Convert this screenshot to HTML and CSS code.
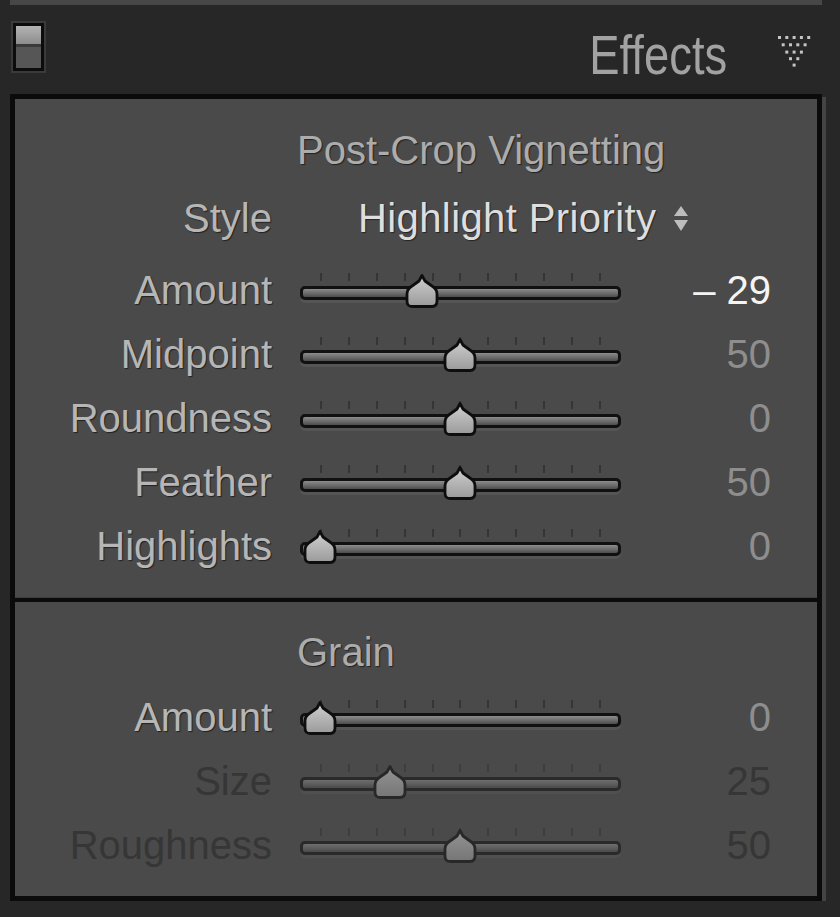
FILE: index.html
```html
<!DOCTYPE html>
<html lang="en">
<head>
  <meta charset="UTF-8">
  <title>Effects</title>
  <link rel="stylesheet" href="styles.css">
</head>
<body>
  <div class="top-strip"></div>

  <!-- Panel header -->
  <div class="panel-header">
    <div class="toggle"><div class="toggle-knob"></div></div>
    <h2 class="panel-title">Effects</h2>
    <svg class="collapse-icon" width="36" height="33" viewBox="0 0 36 33">
      <g fill="#c4c4c4">
        <rect x="2" y="1" width="3" height="3"/><rect x="9.3" y="1" width="3" height="3"/><rect x="16.6" y="1" width="3" height="3"/><rect x="23.9" y="1" width="3" height="3"/><rect x="31.2" y="1" width="3" height="3"/>
        <rect x="5.7" y="8.3" width="3" height="3"/><rect x="13" y="8.3" width="3" height="3"/><rect x="20.3" y="8.3" width="3" height="3"/><rect x="27.6" y="8.3" width="3" height="3"/>
        <rect x="9.3" y="15.6" width="3" height="3"/><rect x="16.6" y="15.6" width="3" height="3"/><rect x="23.9" y="15.6" width="3" height="3"/>
        <rect x="13" y="22.2" width="3" height="3"/><rect x="20.3" y="22.2" width="3" height="3"/>
        <rect x="16.6" y="28.6" width="3" height="3"/>
      </g>
    </svg>
  </div>

  <div class="panel">
    <!-- Vignetting -->
    <section class="group group-vignette">
      <div class="row group-title-row">
        <span class="label"></span>
        <span class="group-title">Post-Crop Vignetting</span>
      </div>
      <div class="row style-row">
        <span class="label">Style</span>
        <span class="style-value">Highlight Priority
          <svg class="updown" width="18" height="27" viewBox="0 0 18 27">
            <path d="M9 1 L16 11 L2 11 Z" fill="#bdbdbd"/>
            <path d="M2 15 L16 15 L9 26 Z" fill="#bdbdbd"/>
          </svg>
        </span>
      </div>
      <div class="row slider-row first-slider">
        <span class="label">Amount</span>
        <div class="slider" style="--v: 0.365">
          <div class="ticks"><i></i><i></i><i></i><i></i><i></i><i></i><i></i><i></i><i></i><i></i><i></i></div>
          <div class="track"></div>
          <svg class="thumb" width="34" height="34" viewBox="0 0 34 34"><use href="#thumb-shape"/></svg>
        </div>
        <span class="value value-active">&ndash; 29</span>
      </div>
      <div class="row slider-row">
        <span class="label">Midpoint</span>
        <div class="slider" style="--v: 0.5">
          <div class="ticks"><i></i><i></i><i></i><i></i><i></i><i></i><i></i><i></i><i></i><i></i><i></i></div>
          <div class="track"></div>
          <svg class="thumb" width="34" height="34" viewBox="0 0 34 34"><use href="#thumb-shape"/></svg>
        </div>
        <span class="value">50</span>
      </div>
      <div class="row slider-row">
        <span class="label">Roundness</span>
        <div class="slider" style="--v: 0.5">
          <div class="ticks"><i></i><i></i><i></i><i></i><i></i><i></i><i></i><i></i><i></i><i></i><i></i></div>
          <div class="track"></div>
          <svg class="thumb" width="34" height="34" viewBox="0 0 34 34"><use href="#thumb-shape"/></svg>
        </div>
        <span class="value">0</span>
      </div>
      <div class="row slider-row">
        <span class="label">Feather</span>
        <div class="slider" style="--v: 0.5">
          <div class="ticks"><i></i><i></i><i></i><i></i><i></i><i></i><i></i><i></i><i></i><i></i><i></i></div>
          <div class="track"></div>
          <svg class="thumb" width="34" height="34" viewBox="0 0 34 34"><use href="#thumb-shape"/></svg>
        </div>
        <span class="value">50</span>
      </div>
      <div class="row slider-row">
        <span class="label">Highlights</span>
        <div class="slider" style="--v: 0">
          <div class="ticks"><i></i><i></i><i></i><i></i><i></i><i></i><i></i><i></i><i></i><i></i><i></i></div>
          <div class="track"></div>
          <svg class="thumb" width="34" height="34" viewBox="0 0 34 34"><use href="#thumb-shape"/></svg>
        </div>
        <span class="value">0</span>
      </div>
    </section>

    <!-- Grain -->
    <section class="group group-grain">
      <div class="row group-title-row">
        <span class="label"></span>
        <span class="group-title">Grain</span>
      </div>
      <div class="row slider-row first-slider">
        <span class="label">Amount</span>
        <div class="slider" style="--v: 0">
          <div class="ticks"><i></i><i></i><i></i><i></i><i></i><i></i><i></i><i></i><i></i><i></i><i></i></div>
          <div class="track"></div>
          <svg class="thumb" width="34" height="34" viewBox="0 0 34 34"><use href="#thumb-shape"/></svg>
        </div>
        <span class="value">0</span>
      </div>
      <div class="row slider-row disabled">
        <span class="label">Size</span>
        <div class="slider" style="--v: 0.25">
          <div class="ticks"><i></i><i></i><i></i><i></i><i></i><i></i><i></i><i></i><i></i><i></i><i></i></div>
          <div class="track"></div>
          <svg class="thumb" width="34" height="34" viewBox="0 0 34 34"><use href="#thumb-shape"/></svg>
        </div>
        <span class="value">25</span>
      </div>
      <div class="row slider-row disabled">
        <span class="label">Roughness</span>
        <div class="slider" style="--v: 0.5">
          <div class="ticks"><i></i><i></i><i></i><i></i><i></i><i></i><i></i><i></i><i></i><i></i><i></i></div>
          <div class="track"></div>
          <svg class="thumb" width="34" height="34" viewBox="0 0 34 34"><use href="#thumb-shape"/></svg>
        </div>
        <span class="value">50</span>
      </div>
    </section>
  </div>

  <!-- shared slider thumb -->
  <svg width="0" height="0" class="defs">
    <defs>
      <linearGradient id="thumb-fill" x1="0" y1="0" x2="0" y2="1">
        <stop offset="0" stop-color="#d0d0d0"/>
        <stop offset="1" stop-color="#9a9a9a"/>
      </linearGradient>
      <path id="thumb-shape" d="M17 1.5 L20 7 L27 12 Q32 15 32 20 L32 27 Q32 32.5 27 32.5 L7 32.5 Q2 32.5 2 27 L2 20 Q2 15 7 12 L14 7 Z"
            fill="url(#thumb-fill)" stroke="#0e0e0e" stroke-width="2.8" stroke-linejoin="round"/>
    </defs>
  </svg>
</body>
</html>
```

FILE: styles.css
```css
* {
  box-sizing: border-box;
}

body {
  margin: 0;
  background: #272727;
  font-family: 'Liberation Sans', Arial, sans-serif;
  overflow: hidden;
}

.defs {
  position: absolute;
}

.top-strip {
  height: 5px;
  margin: 0 18px 0 10px;
  background: #474747;
}

/* Header */
.panel-header {
  height: 89px;
  display: flex;
  align-items: center;
  padding: 0 28px 0 13px;
}

.toggle {
  width: 31px;
  height: 48px;
  margin-top: -6px;
  border: 3px solid #0c0c0c;
  outline: 2px solid #3a3a3a;
  background: #565656;
}

.toggle-knob {
  height: 21px;
  background: linear-gradient(#b4b4b4, #8c8c8c);
  border-bottom: 3px solid #3a3a3a;
}

.panel-title {
  margin: 0 49px 0 auto;
  font-weight: normal;
  font-size: 56px;
  color: #a2a2a2;
  line-height: 1;
  padding-top: 10px;
  transform: scaleX(0.81);
  transform-origin: right center;
}

.collapse-icon {
  display: block;
  margin-top: 4px;
}

/* Panel */
.panel {
  margin: 0 18px 0 10px;
  border: 5px solid #0b0b0b;
  background: #4a4a4a;
  box-shadow: 4px 3px 0 #444;
}

.group-vignette {
  padding: 19px 0 19px;
  border-bottom: 1px solid #3e3e3e;
}

.group-grain {
  padding: 18px 0 19px;
  border-top: 4px solid #0b0b0b;
}

.row {
  height: 64px;
  display: flex;
  align-items: center;
}

.label {
  width: 257px;
  flex: none;
  text-align: right;
  font-size: 40px;
  color: #b6b6b6;
  text-shadow: 1px 1px 1px rgba(0, 0, 0, 0.55);
}

.group-title {
  margin-left: 25px;
  font-size: 40px;
  color: #acacac;
  text-shadow: 1px 1px 1px rgba(0, 0, 0, 0.55);
}

.style-row {
  margin-top: 4px;
}

.style-value {
  margin-left: 86px;
  font-size: 40px;
  letter-spacing: 0.4px;
  color: #dedede;
  text-shadow: 1px 1px 1px rgba(0, 0, 0, 0.5);
  display: flex;
  align-items: center;
  gap: 16px;
}

.updown {
  display: block;
}

.first-slider {
  margin-top: 8px;
}

.group-grain .first-slider {
  margin-top: 1px;
}

/* Slider */
.slider {
  position: relative;
  width: 321px;
  height: 36px;
  margin-left: 28px;
  flex: none;
}

.ticks {
  display: flex;
  justify-content: space-between;
  margin: 1px 20px 0 20px;
  height: 8px;
}

.ticks i {
  width: 2px;
  height: 8px;
  background: #353535;
}

.track {
  margin-top: 5px;
  height: 14px;
  border: 3px solid #111;
  border-radius: 5px;
  background: linear-gradient(#8c8c8c 0%, #6e6e6e 50%, #4c4c4c 100%);
  box-shadow: 0 3px 0 #555;
}

.thumb {
  position: absolute;
  top: 2px;
  left: calc(3px + var(--v) * 280px);
}

.value {
  width: 150px;
  flex: none;
  text-align: right;
  font-size: 40px;
  color: #8e8e8e;
}

.value-active {
  color: #f4f4f4;
}

/* Disabled rows */
.disabled .label,
.disabled .value {
  color: #363636;
  text-shadow: none;
}

.disabled .slider {
  opacity: 0.55;
}
```
